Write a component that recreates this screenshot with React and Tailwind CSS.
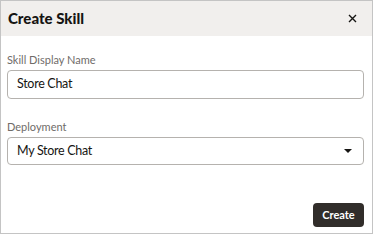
export default function App() {
  return (
    <div className="w-[373px] h-[234px] bg-white border border-[#c4c4c4] flex flex-col" style={{ fontFamily: 'Lato, sans-serif' }}>
      <div className="h-[35px] bg-[#f1efed] flex items-center justify-between pl-[7px] pr-[15px] shrink-0">
        <div className="text-[15px] font-black text-[#161513]">Create Skill</div>
        <svg width="9" height="9" viewBox="0 0 9 9" className="text-[#161513]">
          <path d="M1 1L8 8M8 1L1 8" stroke="currentColor" strokeWidth="1.4" />
        </svg>
      </div>
      <div className="flex flex-col pl-[6px] pr-[8px] pt-[17px] flex-1">
        <label className="text-[11px] text-[#6f6c69] leading-[14px]">Skill Display Name</label>
        <div className="mt-[3px] h-[29px] border border-[#b5b2ae] rounded-[4px] flex items-center px-[9px] text-[12.5px] tracking-[-0.3px] text-[#161513]">Store Chat</div>
        <label className="mt-[21px] text-[11px] text-[#6f6c69] leading-[14px]">Deployment</label>
        <div className="mt-[3px] h-[28px] border border-[#b5b2ae] rounded-[4px] flex items-center justify-between pl-[9px] pr-[11px] text-[12.5px] tracking-[-0.3px] text-[#161513]">
          <span>My Store Chat</span>
          <svg width="8" height="4" viewBox="0 0 8 4"><path d="M0 0H8L4 4Z" fill="#161513" /></svg>
        </div>
        <div className="flex-1" />
        <div className="flex justify-end mb-[6px]">
          <button className="w-[51px] h-[24px] bg-[#312d2a] text-white rounded-[4px] text-[11px] font-bold">Create</button>
        </div>
      </div>
    </div>
  );
}
